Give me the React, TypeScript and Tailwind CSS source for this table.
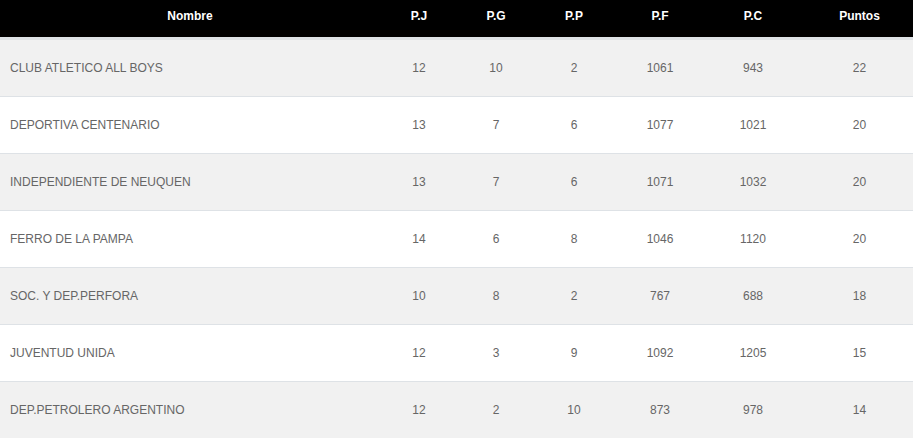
import React from "react";

const rows = [
  ["CLUB ATLETICO ALL BOYS", "12", "10", "2", "1061", "943", "22"],
  ["DEPORTIVA CENTENARIO", "13", "7", "6", "1077", "1021", "20"],
  ["INDEPENDIENTE DE NEUQUEN", "13", "7", "6", "1071", "1032", "20"],
  ["FERRO DE LA PAMPA", "14", "6", "8", "1046", "1120", "20"],
  ["SOC. Y DEP.PERFORA", "10", "8", "2", "767", "688", "18"],
  ["JUVENTUD UNIDA", "12", "3", "9", "1092", "1205", "15"],
  ["DEP.PETROLERO ARGENTINO", "12", "2", "10", "873", "978", "14"],
];

const headers = ["Nombre", "P.J", "P.G", "P.P", "P.F", "P.C", "Puntos"];
const grid = "grid grid-cols-[380px_78px_76px_80px_92px_94px_119px]";

export default function App() {
  return (
    <div className="w-[913px] h-[442px] bg-white overflow-hidden" style={{ fontFamily: '"Liberation Sans", Arial, sans-serif' }}>
      <div className="w-[919px]">
        <div className={`${grid} h-[37px] bg-black border-b-2 border-[#dee2e6] box-content`}>
          {headers.map((h) => (
            <div key={h} className="text-center text-white font-bold text-[12px] leading-[14px] pt-[9px]">
              {h}
            </div>
          ))}
        </div>
        {rows.map((r, i) => (
          <div
            key={r[0]}
            className={`${grid} h-[56px] box-content border-t border-[#dee2e6] ${i % 2 === 0 ? "bg-[#f1f1f1]" : "bg-white"}`}
          >
            {r.map((c, j) => (
              <div
                key={j}
                className={`flex items-center text-[12px] text-[#666] ${j === 0 ? "pl-[10px]" : "justify-center"}`}
              >
                {c}
              </div>
            ))}
          </div>
        ))}
      </div>
    </div>
  );
}
